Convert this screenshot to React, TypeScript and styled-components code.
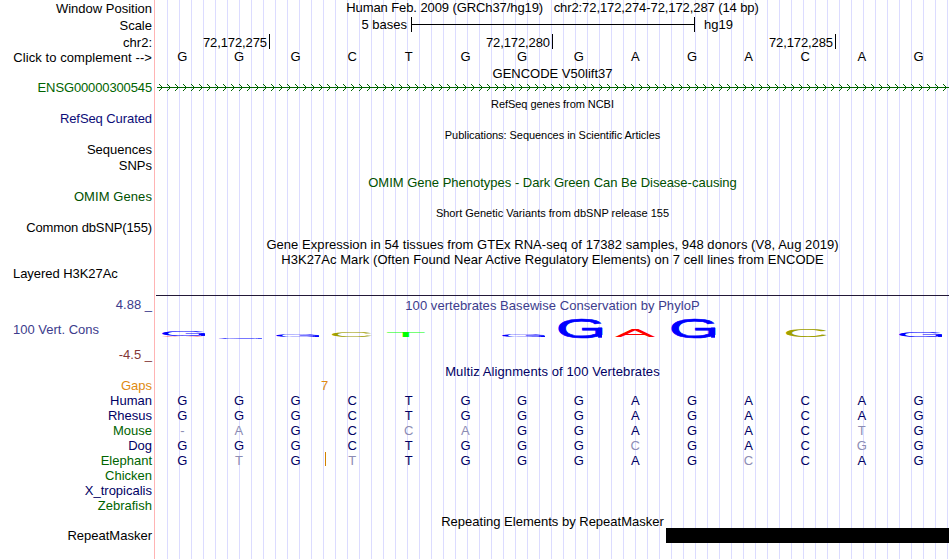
import styled, { createGlobalStyle } from "styled-components"

const GlobalStyle = createGlobalStyle`
	body {
		margin: 0;
		background: #fff;
	}
`

const colors = {
	black: "#000",
	green: "#006400",
	darkGreen: "#005000",
	blue: "#0c0c78",
	navy: "#000064",
	violet: "#3c3c8c",
	maroon: "#823737",
	orange: "#e08a10",
	faded: "#8c8cb4",
}

const Browser = styled.main`
	display: flex;
	box-sizing: border-box;
	width: 950px;
	height: 559px;
	padding-right: 1px;
	overflow: hidden;
	font-family: "Liberation Sans", Arial, sans-serif;
	font-size: 13px;
	line-height: 15px;
	white-space: pre;
`

const Labels = styled.div`
	display: flex;
	flex-direction: column;
	box-sizing: border-box;
	width: 155px;
	padding-right: 2px;
	margin-right: 1px;
	border-right: 1px solid #ffb4b4;
`

const Label = styled.div<{ $gap?: number; $color?: string; $left?: boolean; $spacing?: number }>`
	height: 15px;
	margin-top: ${(props) => props.$gap ?? 0}px;
	padding-left: ${(props) => (props.$left ? 13 : 0)}px;
	color: ${(props) => props.$color ?? colors.black};
	text-align: ${(props) => (props.$left ? "left" : "right")};
	letter-spacing: ${(props) => props.$spacing ?? 0}px;
`

const Tracks = styled.div`
	flex: 1;
	display: flex;
	flex-direction: column;
	min-width: 0;
	background: repeating-linear-gradient(to right, transparent 0 11px, #dcdcff 11px 12px);
`

const Title = styled.div<{ $gap?: number; $color?: string; $small?: boolean; $spacing?: number }>`
	height: 15px;
	margin-top: ${(props) => props.$gap ?? 0}px;
	color: ${(props) => props.$color ?? colors.black};
	font-size: ${(props) => (props.$small ? 11 : 13)}px;
	letter-spacing: ${(props) => props.$spacing ?? 0}px;
	text-align: center;
`

const ScaleRow = styled.div`
	display: flex;
	height: 15px;
	margin-top: 2px;
`

const ScaleText = styled.span<{ $width: number }>`
	width: ${(props) => props.$width}px;
	padding-right: 4px;
	text-align: right;
`

const ScaleBar = styled.span`
	display: flex;
	align-items: center;
	box-sizing: border-box;
	width: 284px;
	margin-right: 9px;
	border: solid #000;
	border-width: 0 1px;

	&::before {
		content: "";
		flex: 1;
		height: 1px;
		background: #000;
	}
`

const PositionRow = styled.div`
	display: flex;
	height: 15px;
	margin-top: 2px;
`

const Position = styled.span<{ $width: number }>`
	box-sizing: border-box;
	width: ${(props) => props.$width}px;
	padding: 1px 2px 0 0;
	border-right: 1px solid #000;
	letter-spacing: -0.1px;
	text-align: right;
`

const Bases = styled.div<{ $color?: string }>`
	position: relative;
	display: grid;
	grid-template-columns: repeat(14, 56.64px);
	height: 15px;
	margin-left: -2px;
	color: ${(props) => props.$color ?? colors.black};
	text-align: center;
`

const Base = styled.span<{ $faded?: boolean }>`
	color: ${(props) => (props.$faded ? colors.faded : "inherit")};
`

const Insert = styled.i`
	position: absolute;
	left: 171px;
	top: -1px;
	width: 1px;
	height: 14px;
	background: #d28200;
`

const GeneTrack = styled.svg`
	display: block;
	height: 7px;
	margin-top: 3px;
`

const Rule = styled.div`
	height: 1px;
	margin-top: 28px;
	background: #231937;
`

const Logo = styled.svg`
	display: block;
	height: 30px;
`

const GapCount = styled.div`
	height: 15px;
	margin-top: -1px;
	padding-left: 165px;
	color: ${colors.orange};
`

const Repeat = styled.div`
	height: 15px;
	margin-top: -1px;
	margin-left: 510px;
	background: #000;
`

const sequence = "GGGCTGGGAGACAG"

// lower case marks a base that differs from the human one
const alignments = [
	{ species: "Human", bases: "GGGCTGGGAGACAG" },
	{ species: "Rhesus", bases: "GGGCTGGGAGACAG" },
	{ species: "Mouse", bases: "-aGCcaGGAGACtG" },
	{ species: "Dog", bases: "GGGCTGGGcGACgG" },
	{ species: "Elephant", bases: "GtGtTGGGAGcCAG", insert: true },
]

const blue = "#0000ff"
const olive = "#a0a000"

const logoLetters = [
	{ char: "A", x: 162, y: 335.6, w: 42, h: 1, fill: "#ff0000" },
	{ char: "G", x: 162, y: 331, w: 43, h: 5, fill: blue },
	{ char: "G", x: 219, y: 338, w: 43, h: 1, fill: blue },
	{ char: "G", x: 276, y: 334, w: 43, h: 3, fill: blue },
	{ char: "C", x: 332, y: 332, w: 40, h: 5, fill: olive },
	{ char: "T", x: 387, y: 332, w: 38, h: 5, fill: "#00ff00" },
	{ char: "G", x: 502, y: 335, w: 43, h: 2, fill: blue },
	{ char: "G", x: 559, y: 318, w: 43, h: 20, fill: blue },
	{ char: "A", x: 615, y: 330, w: 40, h: 7, fill: "#ff0000" },
	{ char: "G", x: 672, y: 318, w: 43, h: 20, fill: blue },
	{ char: "C", x: 786, y: 329, w: 41, h: 8, fill: olive },
	{ char: "G", x: 899, y: 332, w: 43, h: 5, fill: blue },
]

// ink box of each glyph at a 100px font size
const ink: Record<string, { left: number; width: number; top: number; height: number }> = {
	A: { left: 0.2, width: 66.3, top: 68.8, height: 68.8 },
	C: { left: 5, width: 63.6, top: 69.8, height: 70.8 },
	G: { left: 5, width: 66, top: 69.8, height: 70.8 },
	T: { left: 2.1, width: 57, top: 68.8, height: 68.8 },
}

const ConservationLogo = () => {
	return (
		<Logo width="793" height="30" viewBox="156 313 793 30">
			{logoLetters.map(({ char, x, y, w, h, fill }) => {
				const box = ink[char]
				const sx = w / box.width
				const sy = h / box.height
				return (
					<g
						key={`${char}${x}`}
						fill={fill}
						transform={`matrix(${sx} 0 0 ${sy} ${x - box.left * sx} ${y + box.top * sy})`}
					>
						<text fontSize="100" stroke={fill} strokeWidth={h > 10 ? 2 : 0}>
							{char}
						</text>
						{char === "G" && <rect x="65" y="-36" width="6" height="36" />}
					</g>
				)
			})}
		</Logo>
	)
}

const Gene = () => {
	return (
		<GeneTrack width="793" height="7" viewBox="156 84 793 7" shapeRendering="crispEdges">
			<defs>
				<pattern id="strand" x="156" y="84" width="8" height="7" patternUnits="userSpaceOnUse">
					<path
						d="M3 0h1v1h-1zM4 1h1v1h-1zM5 2h1v1h-1zM6 3h1v1h-1zM5 4h1v1h-1zM4 5h1v1h-1zM3 6h1v1h-1z"
						fill={colors.green}
					/>
				</pattern>
			</defs>
			<rect x="157" y="84" width="792" height="7" fill="url(#strand)" />
			<rect x="157" y="87" width="792" height="1" fill={colors.green} />
		</GeneTrack>
	)
}

const TrackLabels = () => {
	return (
		<Labels>
			<Label $gap={1}>Window Position</Label>
			<Label $gap={2}>Scale</Label>
			<Label $gap={2}>chr2:</Label>
			<Label $spacing={0.08}>Click to complement --&gt;</Label>
			<Label $gap={15} $color={colors.green} $spacing={-0.13}>
				ENSG00000300545
			</Label>
			<Label $gap={16} $color={colors.blue} $spacing={-0.08}>
				RefSeq Curated
			</Label>
			<Label $gap={16}>Sequences</Label>
			<Label $gap={1}>SNPs</Label>
			<Label $gap={16} $color={colors.darkGreen} $spacing={0.08}>
				OMIM Genes
			</Label>
			<Label $gap={16} $spacing={-0.12}>
				Common dbSNP(155)
			</Label>
			<Label $gap={31} $left $spacing={-0.05}>
				Layered H3K27Ac
			</Label>
			<Label $gap={16} $color={colors.violet}>
				4.88 _
			</Label>
			<Label $gap={10} $color={colors.violet} $left>
				100 Vert. Cons
			</Label>
			<Label $gap={10} $color={colors.maroon}>
				-4.5 _
			</Label>
			<Label $gap={16} $color={colors.orange}>
				Gaps
			</Label>
			<Label $color={colors.navy}>Human</Label>
			<Label $color={colors.navy}>Rhesus</Label>
			<Label $color={colors.green}>Mouse</Label>
			<Label $color={colors.navy}>Dog</Label>
			<Label $color={colors.green}>Elephant</Label>
			<Label $color={colors.green}>Chicken</Label>
			<Label $color={colors.navy}>X_tropicalis</Label>
			<Label $color={colors.green}>Zebrafish</Label>
			<Label $gap={15}>RepeatMasker</Label>
		</Labels>
	)
}

const App = () => {
	return (
		<>
			<GlobalStyle />
			<Browser>
				<TrackLabels />
				<Tracks>
					<Title $spacing={-0.09}>
						{"Human Feb. 2009 (GRCh37/hg19)   chr2:72,172,274-72,172,287 (14 bp)"}
					</Title>
					<ScaleRow>
						<ScaleText $width={251}>5 bases</ScaleText>
						<ScaleBar />
						hg19
					</ScaleRow>
					<PositionRow>
						<Position $width={114}>72,172,275</Position>
						<Position $width={283}>72,172,280</Position>
						<Position $width={283}>72,172,285</Position>
					</PositionRow>
					<Bases>
						{[...sequence].map((base, i) => (
							<Base key={i}>{base}</Base>
						))}
					</Bases>
					<Title $gap={2}>GENCODE V50lift37</Title>
					<Gene />
					<Title $gap={6} $small $spacing={-0.06}>
						RefSeq genes from NCBI
					</Title>
					<Title $gap={16} $small $spacing={-0.05}>
						Publications: Sequences in Scientific Articles
					</Title>
					<Title $gap={32} $color={colors.darkGreen}>
						OMIM Gene Phenotypes - Dark Green Can Be Disease-causing
					</Title>
					<Title $gap={16} $small>
						Short Genetic Variants from dbSNP release 155
					</Title>
					<Title $gap={16} $spacing={0.055}>
						Gene Expression in 54 tissues from GTEx RNA-seq of 17382 samples, 948 donors (V8, Aug 2019)
					</Title>
					<Title $spacing={0.058}>
						H3K27Ac Mark (Often Found Near Active Regulatory Elements) on 7 cell lines from ENCODE
					</Title>
					<Rule />
					<Title $gap={2} $color={colors.violet} $spacing={0.05}>
						100 vertebrates Basewise Conservation by PhyloP
					</Title>
					<ConservationLogo />
					<Title $gap={21} $color={colors.navy} $spacing={0.1}>
						Multiz Alignments of 100 Vertebrates
					</Title>
					<GapCount>7</GapCount>
					{alignments.map(({ species, bases, insert }) => (
						<Bases key={species} $color={colors.navy}>
							{[...bases].map((base, i) => (
								<Base key={i} $faded={base === "-" || base !== base.toUpperCase()}>
									{base.toUpperCase()}
								</Base>
							))}
							{insert && <Insert />}
						</Bases>
					))}
					<Title $gap={46}>Repeating Elements by RepeatMasker</Title>
					<Repeat />
				</Tracks>
			</Browser>
		</>
	)
}

export default App
